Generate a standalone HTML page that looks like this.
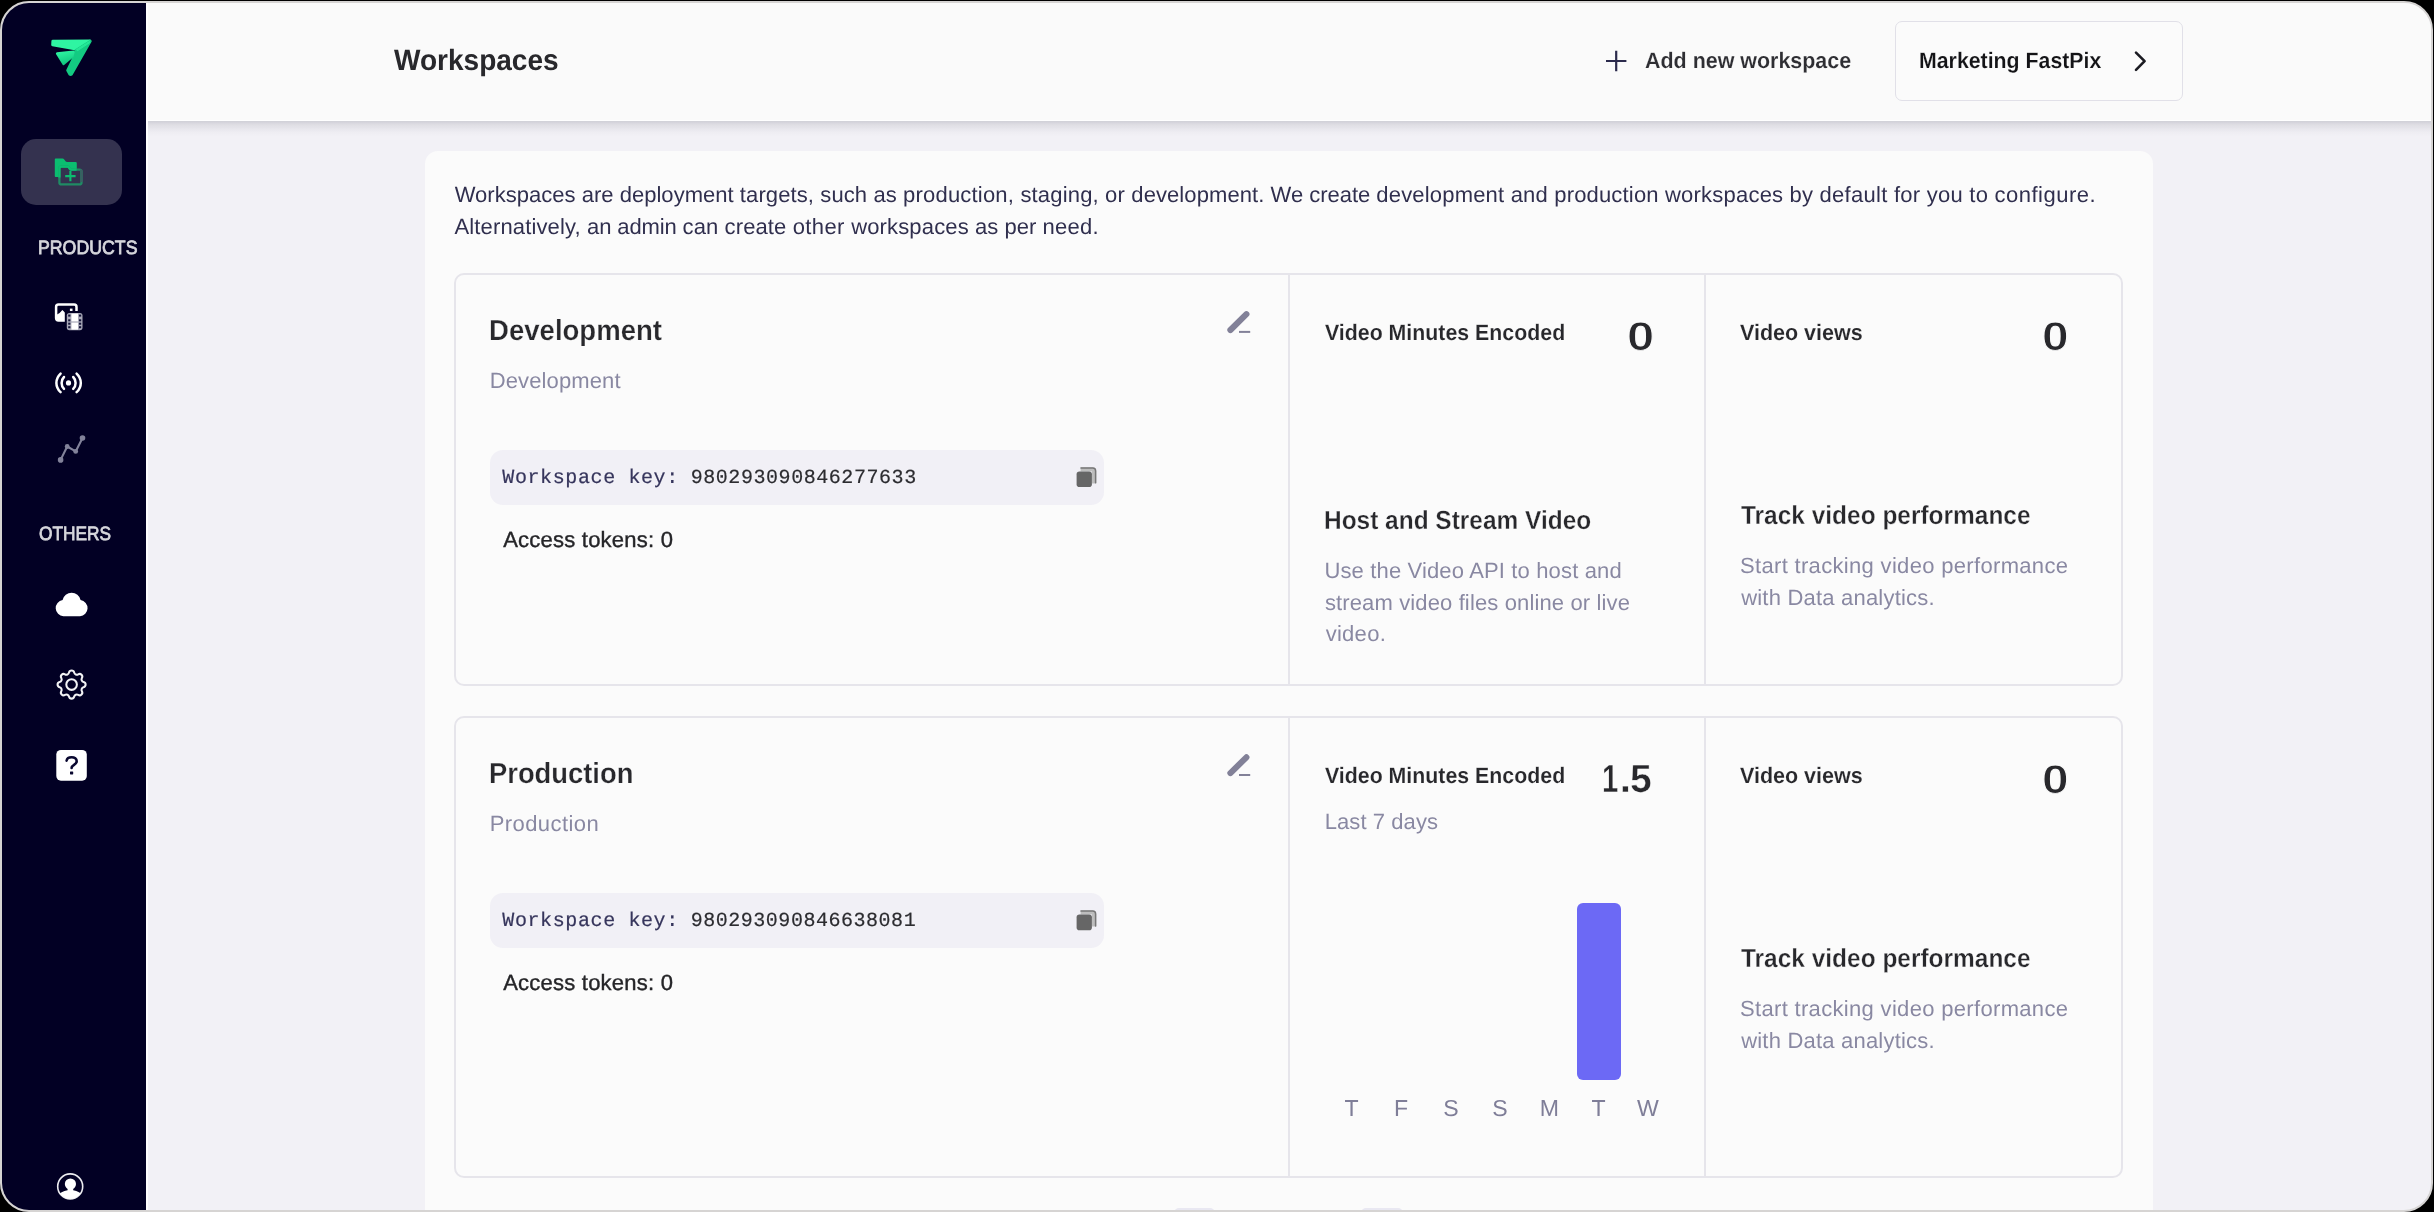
<!DOCTYPE html>
<html lang="en">
<head>
<meta charset="utf-8">
<title>Workspaces</title>
<style>
html,body{margin:0;padding:0;width:2434px;height:1212px;overflow:hidden;background:#000;}
body{font-family:"Liberation Sans",sans-serif;text-rendering:geometricPrecision;}
#win{position:absolute;left:0;top:1px;width:2433px;height:1211px;box-sizing:border-box;border:2px solid #d6d4d3;border-radius:29px;overflow:hidden;background:#f2f1f6;}
#pg{will-change:transform;position:absolute;left:-2px;top:-3px;width:2434px;height:1212px;}
#pg div, #pg span.t, #pg svg{position:absolute;}
.t{white-space:pre;}
#side{left:0;top:0;width:146px;height:1212px;background:#020024;}
#vline{left:146px;top:0;width:2px;height:1212px;background:#fff;}
#hdr{left:148px;top:0;width:2286px;height:120px;background:#fafafa;border-bottom:1.5px solid #fff;}
#shadow{left:148px;top:121px;width:2286px;height:15px;background:linear-gradient(to bottom,rgba(20,20,40,.15) 0,rgba(20,20,40,.085) 25%,rgba(20,20,40,.04) 55%,rgba(20,20,40,.012) 80%,rgba(20,20,40,0) 100%);}
#active{left:21px;top:138.5px;width:101px;height:66px;border-radius:15px;background:#34324f;}
#wsbtn{left:1894.5px;top:21px;width:288.5px;height:79.8px;box-sizing:border-box;border:1.6px solid #e1e0e8;border-radius:7px;background:#fbfbfb;}
#main{left:424.5px;top:150.8px;width:1728.5px;height:1100px;border-radius:13px;background:#fbfbfb;}
.card{left:454px;width:1669px;box-sizing:border-box;border:2px solid #e6e5eb;border-radius:10px;}
.card i{position:absolute;top:0;bottom:0;width:2px;background:#e6e5eb;}
#dev{top:273px;height:412.5px;}
#prod{top:716px;height:462px;}
.key{left:490px;width:613.5px;height:55px;border-radius:13px;background:#f1f0f6;}
.sl{top:1208.4px;height:6px;border-radius:5px 5px 0 0;background:#e9e8f2;}
#bar{left:1576.5px;top:903.2px;width:44.8px;height:176.5px;border-radius:6px;background:#6c69f5;}
</style>
</head>
<body>
<div id="win"><div id="pg">
<div id="side"></div>
<div id="vline"></div>
<div id="hdr"></div>
<div id="shadow"></div>
<div id="active"></div>
<div id="wsbtn"></div>
<div id="main"></div>
<div class="card" id="dev"><i style="left:832.3px"></i><i style="left:1247.7px"></i></div>
<div class="card" id="prod"><i style="left:832.3px"></i><i style="left:1247.7px"></i></div>
<div class="key" style="top:449.9px"></div>
<div class="key" style="top:893px"></div>
<div id="bar"></div>
<div class="sl" style="left:1174px;width:41px"></div>
<div class="sl" style="left:1361px;width:42px"></div>
<!--ICONS_START-->
<svg width="2434" height="1212" viewBox="0 0 2434 1212" style="left:0;top:0">
<defs>
<linearGradient id="lg1" x1="0" y1="0" x2="0.35" y2="1"><stop offset="0" stop-color="#2ff5a2"/><stop offset="0.45" stop-color="#22e394"/><stop offset="1" stop-color="#13cb82"/></linearGradient>
<clipPath id="pc"><circle cx="70.2" cy="1186.4" r="12.4"/></clipPath>
</defs>
<!-- logo -->
<g stroke-linejoin="round" stroke-width="2.4">
<path d="M52.8 41.2 L90 40.8 L76.2 49.2 L52.6 44.9 Z" fill="#2ff5a2" stroke="#2ff5a2" stroke-width="2.8"/>
<path d="M90.2 41.4 L71.4 74.2 Q70.6 75 69.8 74.2 L67.6 70.4 L73.8 57.6 L76 50.4 Z" fill="#13cb82" stroke="#13cb82" stroke-width="2.8"/>
<path d="M57.2 53.6 L73.4 51.9 L72.2 56.4 L63.6 63.8 Z" fill="url(#lg1)" stroke="url(#lg1)" stroke-width="2.6"/>
<path d="M76.4 49.6 L89.6 41.4 L89.8 42.6 L77.4 50.8 Z" fill="#25e898" stroke="#25e898" stroke-width="1"/>
</g>
<!-- active folder icon -->
<path d="M55.6 158.6 H62.6 Q63.6 158.6 64.2 159.4 L65.8 161.6 Q66.2 162 67 162 H75.6 Q76.8 162 76.8 163.2 V176 Q76.8 177 75.8 177 H55.6 Q54.8 177 54.8 176 V159.6 Q54.8 158.6 55.6 158.6 Z" fill="#0bbd70"/>
<path d="M61.4 166.6 H67.4 Q68.2 166.6 68.8 167.4 L70 169 Q70.4 169.6 71.2 169.6 H79.4 Q81.5 169.6 81.5 171.6 V182.4 Q81.5 184.4 79.4 184.4 H61.4 Q59.4 184.4 59.4 182.4 V168.6 Q59.4 166.6 61.4 166.6 Z" fill="#34324f" stroke="#1f8b64" stroke-width="2.3"/>
<path d="M59.4 177.5 V168.6 Q59.4 166.6 61.4 166.6 H67.4 Q68.2 166.6 68.8 167.4 L70 169 Q70.4 169.6 71.2 169.6 H76.6" fill="none" stroke="#0bbd70" stroke-width="2.3"/>
<path d="M80.4 169.9 Q81.6 170.4 81.6 171.6 V182" fill="none" stroke="#3a5f62" stroke-width="2.3"/>
<path d="M65.2 176.1 H75.6 M70.4 170.9 V181.3" stroke="#0bbd70" stroke-width="2.1" fill="none"/>
<!-- media icon -->
<rect x="56.1" y="304.6" width="20.4" height="15.8" rx="2.4" fill="none" stroke="#fff" stroke-width="2.5"/>
<path d="M57 320.6 V314.6 L59.6 313 L62.4 310 L65.4 313 V320.6 Z" fill="#fff"/>
<rect x="69.9" y="308.6" width="2.6" height="2.6" fill="#fff"/>
<rect x="64.8" y="311" width="20" height="21" fill="#020024"/>
<rect x="66.8" y="312.9" width="15.7" height="17.3" rx="2.6" fill="#a9a9b8"/>
<rect x="71.4" y="313.6" width="6.6" height="7.8" fill="#fff"/><rect x="71.4" y="322.6" width="6.6" height="7" fill="#fff"/>
<g fill="#16163a"><rect x="68.2" y="314.6" width="2.2" height="2"/><rect x="68.2" y="319.3" width="2.2" height="2"/><rect x="68.2" y="322.7" width="2.2" height="2"/><rect x="68.2" y="326.2" width="2.2" height="2"/>
<rect x="79" y="314.6" width="2.2" height="2"/><rect x="79" y="319.3" width="2.2" height="2"/><rect x="79" y="322.7" width="2.2" height="2"/><rect x="79" y="326.2" width="2.2" height="2"/></g>
<!-- live icon -->
<circle cx="68.5" cy="382.9" r="2.6" fill="#fff"/>
<g fill="none" stroke="#fff" stroke-width="2.5" stroke-linecap="round">
<path d="M60.6 373.6 Q56.4 377.6 56.4 382.9 Q56.4 388.2 60.6 392.2"/>
<path d="M76.6 373.6 Q80.8 377.6 80.8 382.9 Q80.8 388.2 76.6 392.2"/>
<path d="M64 377 Q61.6 379.4 61.6 382.9 Q61.6 386.4 64 388.8"/>
<path d="M73.2 377 Q75.6 379.4 75.6 382.9 Q75.6 386.4 73.2 388.8"/>
</g>
<!-- analytics icon -->
<g stroke="#82829a" fill="#82829a"><path d="M60.6 459.9 L67.2 446.5 L75.7 451.4 L82.5 438" fill="none" stroke-width="2.1" stroke-linejoin="round"/>
<circle cx="60.6" cy="459.9" r="2.8" stroke="none"/><circle cx="67.2" cy="446.5" r="2.4" stroke="none"/><circle cx="75.7" cy="451.4" r="2.4" stroke="none"/><circle cx="82.5" cy="438" r="2.8" stroke="none"/></g>
<!-- cloud -->
<path d="M63.4 616.2 A8.1 8.1 0 0 1 62.6 600.1 A9.2 9.2 0 0 1 80.6 600.1 A8.1 8.1 0 0 1 80 616.2 Z" fill="#fff"/>
<!-- gear (heroicons cog) -->
<g transform="translate(52.9 665.9) scale(1.558)" fill="none" stroke="#f2f2f4" stroke-width="1.32" stroke-linecap="round" stroke-linejoin="round">
<path d="M10.325 4.317c.426-1.756 2.924-1.756 3.35 0a1.724 1.724 0 002.573 1.066c1.543-.94 3.31.826 2.37 2.37a1.724 1.724 0 001.065 2.572c1.756.426 1.756 2.924 0 3.35a1.724 1.724 0 00-1.066 2.573c.94 1.543-.826 3.31-2.37 2.37a1.724 1.724 0 00-2.572 1.065c-.426 1.756-2.924 1.756-3.35 0a1.724 1.724 0 00-2.573-1.066c-1.543.94-3.31-.826-2.37-2.37a1.724 1.724 0 00-1.065-2.572c-1.756-.426-1.756-2.924 0-3.35a1.724 1.724 0 001.066-2.573c-.94-1.543.826-3.31 2.37-2.37.996.608 2.296.07 2.572-1.065z"/>
<path d="M15.4 12a3.4 3.4 0 11-6.8 0 3.4 3.4 0 016.8 0z"/>
</g>
<!-- help -->
<rect x="56.3" y="749.9" width="30.5" height="30.8" rx="4.6" fill="#fff"/>
<path d="M66.6 760.6 C67 758.2 69 757.2 71.6 757.2 C74.6 757.2 76.7 758.8 76.7 761.2 C76.7 765 71.6 764.6 71.6 768" fill="none" stroke="#0a0830" stroke-width="2.6" stroke-linecap="round"/>
<rect x="70" y="771.4" width="3.2" height="3" rx="0.6" fill="#0a0830"/>
<!-- profile -->
<circle cx="70.2" cy="1186.4" r="12.5" fill="none" stroke="#ececf0" stroke-width="1.6"/>
<g clip-path="url(#pc)" fill="#fff"><circle cx="70.4" cy="1184" r="5.6"/><path d="M67.6 1187.5 H73.2 V1190.2 C77.5 1191 81 1193 83 1195.6 V1202 H57.6 V1195.6 C59.6 1193 63.2 1191 67.6 1190.2 Z"/></g>
<!-- header plus + chevron -->
<path d="M1606 61 H1626.4 M1616.2 50.8 V71.2" stroke="#2b2a4c" stroke-width="2.2" fill="none"/>
<path d="M2136 52.6 L2144.6 61.2 L2136 69.8" stroke="#1b1b22" stroke-width="2.6" fill="none" stroke-linecap="round" stroke-linejoin="round"/>
<!-- pencils -->
<g><path d="M1230.4 330 L1246.4 314.2" stroke="#828198" stroke-width="6.1" stroke-linecap="round" fill="none"/><path d="M1239 331.9 H1250.2" stroke="#828198" stroke-width="2" fill="none"/></g>
<g transform="translate(0 443.1)"><path d="M1230.4 330 L1246.4 314.2" stroke="#828198" stroke-width="6.1" stroke-linecap="round" fill="none"/><path d="M1239 331.9 H1250.2" stroke="#828198" stroke-width="2" fill="none"/></g>
<!-- copy icons -->
<g><path d="M1080.6 467.6 H1092.8 Q1096.2 467.6 1096.2 471 V483.4 H1092 V471.4 H1080.6 Z" fill="#bdbdbd"/><path d="M1081 468 H1092.8 Q1095.6 468 1095.6 471 V482.8" fill="none" stroke="#777" stroke-width="1.5" stroke-linecap="round"/><rect x="1076.6" y="471.4" width="15.3" height="15.7" rx="2.8" fill="#666"/></g>
<g transform="translate(0 443.1)"><path d="M1080.6 467.6 H1092.8 Q1096.2 467.6 1096.2 471 V483.4 H1092 V471.4 H1080.6 Z" fill="#bdbdbd"/><path d="M1081 468 H1092.8 Q1095.6 468 1095.6 471 V482.8" fill="none" stroke="#777" stroke-width="1.5" stroke-linecap="round"/><rect x="1076.6" y="471.4" width="15.3" height="15.7" rx="2.8" fill="#666"/></g>
</svg>
<!--ICONS_END-->
<span class="t" style='left:38.48px;top:238.30px;font:400 19.30px/21px "Liberation Sans", sans-serif;color:#d6d6dc;-webkit-text-stroke:0.80px #d6d6dc;transform:scale(0.9192,1.0000);transform-origin:0 17px;'>PRODUCTS</span>
<span class="t" style='left:38.56px;top:524.30px;font:400 19.30px/21px "Liberation Sans", sans-serif;color:#d6d6dc;-webkit-text-stroke:0.80px #d6d6dc;transform:scale(0.8968,1.0000);transform-origin:0 17px;'>OTHERS</span>
<span class="t" style='left:393.94px;top:44.30px;font:700 29.50px/33px "Liberation Sans", sans-serif;color:#28282c;transform:scale(0.9501,1.0000);transform-origin:0 27px;'>Workspaces</span>
<span class="t" style='left:1644.79px;top:48.30px;font:700 22.30px/25px "Liberation Sans", sans-serif;color:#2e2e33;-webkit-text-stroke:0.12px #fafafa;transform:scale(0.9616,1.0000);transform-origin:0 20px;'>Add new workspace</span>
<span class="t" style='left:1918.62px;top:48.30px;font:700 22.30px/25px "Liberation Sans", sans-serif;color:#141417;-webkit-text-stroke:0.12px #fafafa;transform:scale(0.9555,1.0000);transform-origin:0 20px;'>Marketing FastPix</span>
<span class="t" style='left:489.42px;top:315.30px;font:700 29.00px/32px "Liberation Sans", sans-serif;color:#28282c;-webkit-text-stroke:0.25px #fbfbfb;transform:scale(0.9503,1.0000);transform-origin:0 26px;'>Development</span>
<span class="t" style='left:489.72px;top:368.30px;font:400 22.00px/25px "Liberation Sans", sans-serif;color:#8988a2;letter-spacing:0.122px;'>Development</span>
<span class="t" style='left:502.28px;top:467.30px;font:400 20.00px/23px "Liberation Mono", monospace;color:#36355c;-webkit-text-stroke:0.20px #36355c;letter-spacing:0.610px;'>Workspace key:</span>
<span class="t" style='left:690.68px;top:467.30px;font:400 20.00px/23px "Liberation Mono", monospace;color:#2c2c30;-webkit-text-stroke:0.20px #2c2c30;letter-spacing:0.555px;'>980293090846277633</span>
<span class="t" style='left:503.17px;top:527.30px;font:400 22.00px/25px "Liberation Sans", sans-serif;color:#252528;-webkit-text-stroke:0.40px #252528;letter-spacing:0.230px;'>Access tokens: 0</span>
<span class="t" style='left:1325.06px;top:320.30px;font:700 22.30px/25px "Liberation Sans", sans-serif;color:#28282c;-webkit-text-stroke:0.12px #fbfbfb;transform:scale(0.9565,1.0000);transform-origin:0 20px;'>Video Minutes Encoded</span>
<span class="t" style='left:1740.27px;top:320.30px;font:700 22.30px/25px "Liberation Sans", sans-serif;color:#28282c;-webkit-text-stroke:0.12px #fbfbfb;transform:scale(0.9642,1.0000);transform-origin:0 20px;'>Video views</span>
<span class="t" style='left:2041.87px;top:314.30px;font:700 40.20px/45px "Liberation Sans", sans-serif;color:#28282c;-webkit-text-stroke:0.90px #fbfbfb;transform:scale(1.1911,1.0000);transform-origin:0 36px;'>0</span>
<span class="t" style='left:489.46px;top:758.30px;font:700 29.00px/32px "Liberation Sans", sans-serif;color:#28282c;-webkit-text-stroke:0.25px #fbfbfb;transform:scale(0.9431,1.0000);transform-origin:0 26px;'>Production</span>
<span class="t" style='left:489.72px;top:811.30px;font:400 22.00px/25px "Liberation Sans", sans-serif;color:#8988a2;letter-spacing:0.416px;'>Production</span>
<span class="t" style='left:502.28px;top:910.30px;font:400 20.00px/23px "Liberation Mono", monospace;color:#36355c;-webkit-text-stroke:0.20px #36355c;letter-spacing:0.610px;'>Workspace key:</span>
<span class="t" style='left:690.68px;top:910.30px;font:400 20.00px/23px "Liberation Mono", monospace;color:#2c2c30;-webkit-text-stroke:0.20px #2c2c30;letter-spacing:0.526px;'>980293090846638081</span>
<span class="t" style='left:503.17px;top:970.30px;font:400 22.00px/25px "Liberation Sans", sans-serif;color:#252528;-webkit-text-stroke:0.40px #252528;letter-spacing:0.230px;'>Access tokens: 0</span>
<span class="t" style='left:1325.06px;top:763.30px;font:700 22.30px/25px "Liberation Sans", sans-serif;color:#28282c;-webkit-text-stroke:0.12px #fbfbfb;transform:scale(0.9565,1.0000);transform-origin:0 20px;'>Video Minutes Encoded</span>
<span class="t" style='left:1740.27px;top:763.30px;font:700 22.30px/25px "Liberation Sans", sans-serif;color:#28282c;-webkit-text-stroke:0.12px #fbfbfb;transform:scale(0.9642,1.0000);transform-origin:0 20px;'>Video views</span>
<span class="t" style='left:2041.87px;top:757.30px;font:700 40.20px/45px "Liberation Sans", sans-serif;color:#28282c;-webkit-text-stroke:0.90px #fbfbfb;transform:scale(1.1911,1.0000);transform-origin:0 36px;'>0</span>
<span class="t" style='left:1626.81px;top:314.30px;font:700 40.20px/45px "Liberation Sans", sans-serif;color:#28282c;-webkit-text-stroke:0.90px #fbfbfb;transform:scale(1.2185,1.0000);transform-origin:0 36px;'>0</span>
<span class="t" style='left:1602.19px;top:757.30px;font:700 39.40px/44px "Liberation Sans", sans-serif;color:#28282c;-webkit-text-stroke:0.45px #fbfbfb;transform:scale(0.7437,1.0000);transform-origin:0 36px;'>1</span>
<span class="t" style='left:1619.81px;top:757.30px;font:700 39.40px/44px "Liberation Sans", sans-serif;color:#28282c;-webkit-text-stroke:0.30px #fbfbfb;transform:scale(0.9886,1.0000);transform-origin:0 36px;'>.</span>
<span class="t" style='left:1630.07px;top:757.30px;font:700 39.40px/44px "Liberation Sans", sans-serif;color:#28282c;-webkit-text-stroke:0.45px #fbfbfb;transform:scale(0.9920,1.0000);transform-origin:0 36px;'>5</span>
<span class="t" style='left:1324.28px;top:505.30px;font:700 26.20px/30px "Liberation Sans", sans-serif;color:#28282c;-webkit-text-stroke:0.30px #fbfbfb;transform:scale(0.9335,1.0000);transform-origin:0 24px;'>Host and Stream Video</span>
<span class="t" style='left:1324.44px;top:558.30px;font:400 22.00px/25px "Liberation Sans", sans-serif;color:#8988a2;letter-spacing:0.146px;'>Use the Video API to host and</span>
<span class="t" style='left:1324.88px;top:590.30px;font:400 22.00px/25px "Liberation Sans", sans-serif;color:#8988a2;letter-spacing:0.131px;'>stream video files online or live</span>
<span class="t" style='left:1325.63px;top:621.30px;font:400 22.00px/25px "Liberation Sans", sans-serif;color:#8988a2;letter-spacing:0.292px;'>video.</span>
<span class="t" style='left:1741.10px;top:500.30px;font:700 26.20px/30px "Liberation Sans", sans-serif;color:#28282c;-webkit-text-stroke:0.30px #fbfbfb;transform:scale(0.9340,1.0000);transform-origin:0 24px;'>Track video performance</span>
<span class="t" style='left:1740.01px;top:553.30px;font:400 22.00px/25px "Liberation Sans", sans-serif;color:#8988a2;letter-spacing:0.324px;'>Start tracking video performance</span>
<span class="t" style='left:1741.14px;top:585.30px;font:400 22.00px/25px "Liberation Sans", sans-serif;color:#8988a2;letter-spacing:0.208px;'>with Data analytics.</span>
<span class="t" style='left:1741.10px;top:943.30px;font:700 26.20px/30px "Liberation Sans", sans-serif;color:#28282c;-webkit-text-stroke:0.30px #fbfbfb;transform:scale(0.9340,1.0000);transform-origin:0 24px;'>Track video performance</span>
<span class="t" style='left:1740.01px;top:996.30px;font:400 22.00px/25px "Liberation Sans", sans-serif;color:#8988a2;letter-spacing:0.324px;'>Start tracking video performance</span>
<span class="t" style='left:1741.14px;top:1028.30px;font:400 22.00px/25px "Liberation Sans", sans-serif;color:#8988a2;letter-spacing:0.208px;'>with Data analytics.</span>
<span class="t" style='left:1324.69px;top:809.30px;font:400 22.00px/25px "Liberation Sans", sans-serif;color:#8988a2;letter-spacing:0.079px;'>Last 7 days</span>
<span class="t" style='left:1301.59px;top:1095.30px;font:400 23.10px/26px "Liberation Sans", sans-serif;color:#7f7e98;width:100px;text-align:center;'>T</span>
<span class="t" style='left:1351.12px;top:1095.30px;font:400 23.10px/26px "Liberation Sans", sans-serif;color:#7f7e98;width:100px;text-align:center;'>F</span>
<span class="t" style='left:1400.96px;top:1095.30px;font:400 23.10px/26px "Liberation Sans", sans-serif;color:#7f7e98;width:100px;text-align:center;'>S</span>
<span class="t" style='left:1449.94px;top:1095.30px;font:400 23.10px/26px "Liberation Sans", sans-serif;color:#7f7e98;width:100px;text-align:center;'>S</span>
<span class="t" style='left:1499.29px;top:1095.30px;font:400 23.10px/26px "Liberation Sans", sans-serif;color:#7f7e98;width:100px;text-align:center;'>M</span>
<span class="t" style='left:1548.46px;top:1095.30px;font:400 23.10px/26px "Liberation Sans", sans-serif;color:#7f7e98;width:100px;text-align:center;'>T</span>
<span class="t" style='left:1597.99px;top:1095.30px;font:400 23.10px/26px "Liberation Sans", sans-serif;color:#7f7e98;width:100px;text-align:center;'>W</span>
<span class="t" style='left:454.63px;top:182.30px;font:400 22.00px/25px "Liberation Sans", sans-serif;color:#302f4e;'><span style="letter-spacing:0.026px">Workspaces are deployment </span><span style="letter-spacing:0.110px">targets, such as </span><span style="letter-spacing:0.194px">production, </span><span style="letter-spacing:0.171px">staging, or </span><span style="letter-spacing:0.084px">development. </span><span style="letter-spacing:-0.028px">We create </span><span style="letter-spacing:0.187px">development and </span><span style="letter-spacing:0.176px">production </span><span style="letter-spacing:0.212px">workspaces by </span><span style="letter-spacing:0.263px">default for you to </span><span style="letter-spacing:0.479px">configure.</span></span>
<span class="t" style='left:454.47px;top:214.30px;font:400 22.00px/25px "Liberation Sans", sans-serif;color:#302f4e;'><span style="letter-spacing:0.145px">Alternatively, </span><span style="letter-spacing:-0.125px">an admin </span><span style="letter-spacing:0.114px">can create </span><span style="letter-spacing:0.372px">other </span><span style="letter-spacing:0.147px">workspaces </span><span style="letter-spacing:0.019px">as per </span><span style="letter-spacing:0.293px">need.</span></span>
</div></div>
</body>
</html>
